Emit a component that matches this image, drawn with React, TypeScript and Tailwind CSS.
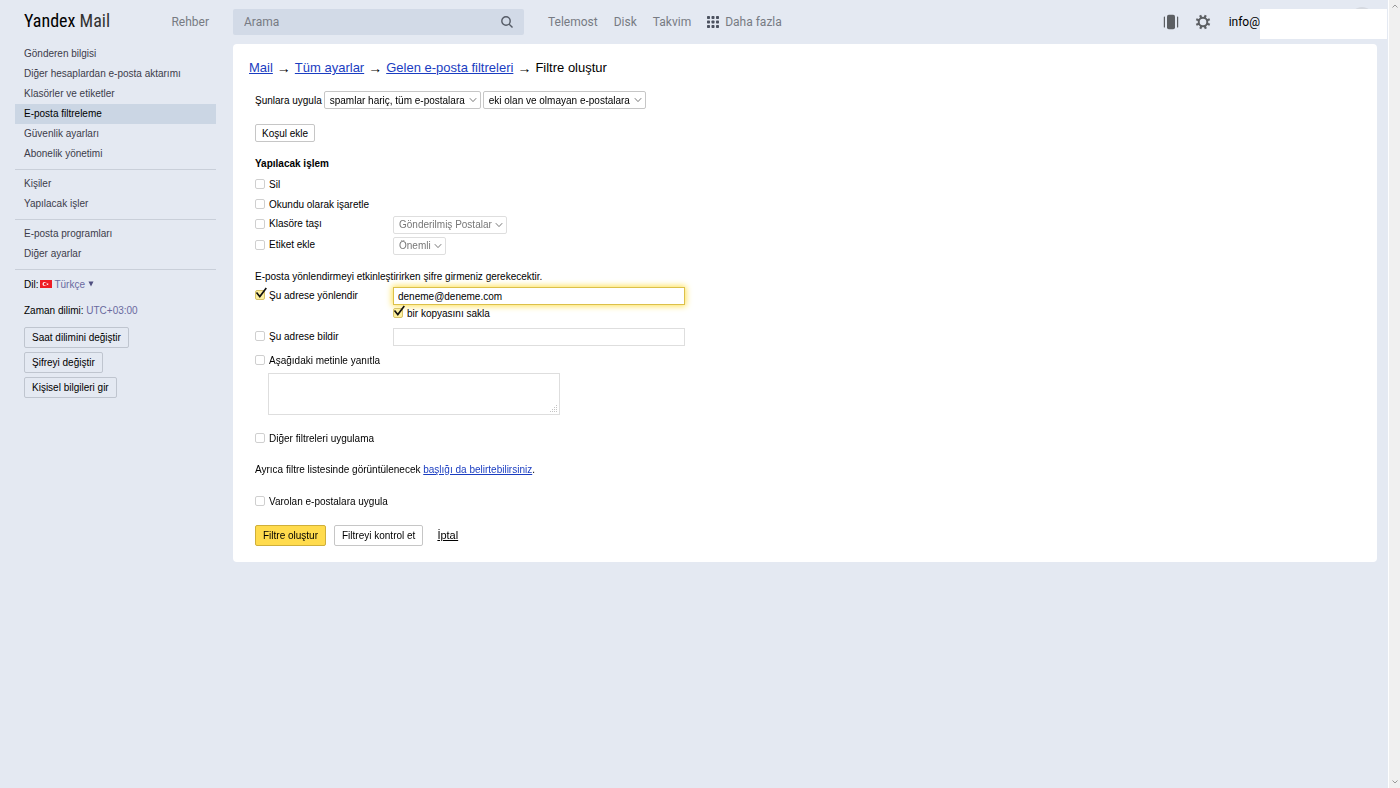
import React, { useState } from 'react';
import clsx from 'clsx';

const menuGroups = [
  [
    'Gönderen bilgisi',
    'Diğer hesaplardan e-posta aktarımı',
    'Klasörler ve etiketler',
    'E-posta filtreleme',
    'Güvenlik ayarları',
    'Abonelik yönetimi',
  ],
  ['Kişiler', 'Yapılacak işler'],
  ['E-posta programları', 'Diğer ayarlar'],
];

const services = ['Telemost', 'Disk', 'Takvim'];

const SearchIcon = () => (
  <svg className="w-3 h-3" viewBox="0 0 12 12" fill="none" stroke="#555b66" strokeWidth="1.4">
    <circle cx="5" cy="5" r="4.2" />
    <path d="M8.2 8.2 11.5 11.5" />
  </svg>
);

const GridIcon = () => (
  <svg className="w-3 h-3" viewBox="0 0 12 12" fill="#4c5260">
    {[0, 4.5, 9].map((y) =>
      [0, 4.5, 9].map((x) => <rect key={`${x}-${y}`} x={x} y={y} width="3" height="3" rx="0.7" />)
    )}
  </svg>
);

const PanelIcon = () => (
  <svg className="w-4 h-4" viewBox="0 0 16 16" fill="#5c5f63">
    <rect x="4" y="0.8" width="8" height="14.4" rx="1.8" />
    <rect x="0.8" y="2.5" width="1.2" height="11" rx="0.5" />
    <rect x="14" y="2.5" width="1.2" height="11" rx="0.5" />
  </svg>
);

const GearIcon = () => (
  <svg className="w-4 h-4" viewBox="0 0 16 16" fill="none" stroke="#5c5f63">
    <circle cx="8" cy="8" r="4.3" strokeWidth="2" />
    {[22, 67, 112, 157, 202, 247, 292, 337].map((a) => (
      <path key={a} d="M8 0.7V3.6" strokeWidth="2.2" transform={`rotate(${a} 8 8)`} />
    ))}
  </svg>
);

const FlagIcon = () => (
  <svg className="w-3 h-2" viewBox="0 0 12 8">
    <rect width="12" height="8" fill="#ee1c25" />
    <circle cx="4.6" cy="4" r="2.1" fill="#fff" />
    <circle cx="5.3" cy="4" r="1.6" fill="#ee1c25" />
    <path d="m7.6 2.9.3.8.9.1-.7.5.2.9-.7-.5-.8.5.3-.9-.7-.5.9-.1z" fill="#fff" />
  </svg>
);

interface CheckProps {
  label: string;
  defaultChecked?: boolean;
}

const Check: React.FC<CheckProps> = ({ label, defaultChecked }) => (
  <label className="inline-flex items-center gap-1">
    <span className="relative flex">
      <input
        type="checkbox"
        defaultChecked={defaultChecked}
        className="peer appearance-none w-[10px] h-[10px] rounded-xs border border-[#cfcfcf] bg-white checked:border-[#d6c36a] checked:bg-[#fdf0a0]"
      />
      <svg
        className="absolute left-0 bottom-px w-3 h-3 pointer-events-none hidden peer-checked:block"
        viewBox="0 0 12 12"
        fill="none"
        stroke="#111"
        strokeWidth="1.6"
      >
        <path d="M1.5 5.6 4.8 9.6 11.3 1" />
      </svg>
    </span>
    {label}
  </label>
);

interface PickerProps {
  label: string;
  value: string;
  disabled?: boolean;
}

const Picker: React.FC<PickerProps> = ({ label, value, disabled }) => (
  <span className={clsx('relative inline-flex', disabled ? 'text-[#777]' : 'text-black')}>
    <select
      aria-label={label}
      disabled={disabled}
      className={clsx(
        'appearance-none h-[18px] pl-[5px] pr-3.5 rounded-xs border bg-white',
        disabled ? 'border-[#dedede]' : 'border-[#c6c6c6]'
      )}
    >
      <option>{value}</option>
    </select>
    <svg
      className="absolute right-1 top-[5px] w-2 h-2 pointer-events-none"
      viewBox="0 0 8 8"
      fill="none"
      stroke="#777"
    >
      <path d="M0.8 2.2 4 5.6 7.2 2.2" />
    </svg>
  </span>
);

const Header = () => (
  <header className="flex items-center h-11 pb-px text-xs text-[#777b83] font-[Roboto,sans-serif]">
    <div className="w-[233px] shrink-0 flex items-center justify-between pl-6 pr-6">
      <a href="#" className="pb-0.5 text-lg leading-6 text-black font-['Roboto_Condensed','Open_Sans_Condensed','DejaVu_Sans_Condensed',sans-serif]">
        Yandex <span className="text-[#333]">Mail</span>
      </a>
      <a href="#">Rehber</a>
    </div>
    <form className="w-[291px] h-[26px] flex items-center px-[11px] rounded-xs bg-[#d2dae7]">
      <input
        type="text"
        aria-label="Arama"
        placeholder="Arama"
        className="flex-1 min-w-0 bg-transparent outline-none placeholder:text-[#777b83]"
      />
      <button type="button" aria-label="Ara">
        <SearchIcon />
      </button>
    </form>
    <nav className="flex items-center gap-4 ml-6">
      {services.map((s) => (
        <a key={s} href="#">{s}</a>
      ))}
      <a href="#" className="flex items-center gap-1.5">
        <GridIcon />
        Daha fazla
      </a>
    </nav>
    <div className="flex items-center ml-auto text-black">
      <button type="button" aria-label="Panel" className="mr-4">
        <PanelIcon />
      </button>
      <button type="button" aria-label="Ayarlar" className="mr-[18px]">
        <GearIcon />
      </button>
      <span>info@</span>
      <div className="relative w-[127px] h-[30px] mt-1 mr-px">
        <span className="absolute left-[90px] -top-0.5 w-6 h-6 rounded-full bg-[#d5d9e0]" />
        <span className="absolute inset-0 bg-white" />
      </div>
    </div>
  </header>
);

const sideButton = 'h-[21px] px-[7px] rounded-xs border border-[#bfc5cf] text-black';

const Sidebar = () => (
  <aside className="w-[233px] shrink-0 pl-[15px] pr-[17px] text-[#3c3c4a]">
    {menuGroups.map((group, i) => (
      <nav key={i} className="border-b border-[#c9cfd9] pb-[5px] mb-1">
        {group.map((item) => (
          <a
            key={item}
            href="#"
            className={clsx('block h-5 leading-[19px] px-[9px]', item === 'E-posta filtreleme' && 'bg-[#cbd6e4] text-black')}
          >
            {item}
          </a>
        ))}
      </nav>
    ))}
    <div className="pl-[9px]">
      <div className="flex items-center h-5 text-black">
        Dil:
        <button type="button" className="flex items-center gap-0.5 ml-0.5 text-[#6a6a9f]">
          <FlagIcon />
          Türkçe
          <svg className="w-1.5 h-1.5 ml-px" viewBox="0 0 6 6" fill="#4f4f80">
            <path d="M0.5 0.5h5L3 5.5z" />
          </svg>
        </button>
      </div>
      <p className="mt-[7px] leading-5 text-black">
        Zaman dilimi: <a href="#" className="text-[#6a6a9f]">UTC+03:00</a>
      </p>
      <div className="flex flex-col items-start gap-1 mt-[6px]">
        <button type="button" className={sideButton}>Saat dilimini değiştir</button>
        <button type="button" className={sideButton}>Şifreyi değiştir</button>
        <button type="button" className={sideButton}>Kişisel bilgileri gir</button>
      </div>
    </div>
  </aside>
);

const crumbs = ['Mail', 'Tüm ayarlar', 'Gelen e-posta filtreleri'];

const FilterForm = () => {
  const [address, setAddress] = useState('deneme@deneme.com');

  return (
    <main className="flex-1 mr-[11px] pt-3 pb-4 rounded-sm bg-white text-black">
      <h1 className="flex items-center gap-1 h-6 pl-4 text-[13px]">
        {crumbs.map((c) => (
          <React.Fragment key={c}>
            <a href="#" className="text-[#1a3dc1] underline">{c}</a>
            <span className="text-sm">→</span>
          </React.Fragment>
        ))}
        Filtre oluştur
      </h1>

      <form className="pl-[22px]">
        <div className="flex items-center gap-0.5 h-5 mt-[10px]">
          Şunlara uygula
          <Picker label="E-posta türü" value="spamlar hariç, tüm e-postalara" />
          <Picker label="Ek durumu" value="eki olan ve olmayan e-postalara" />
        </div>
        <button type="button" className="block h-[18px] mt-[14px] px-1.5 rounded-xs border border-[#c6c6c6]">
          Koşul ekle
        </button>

        <h2 className="h-5 leading-5 mt-3 font-bold">Yapılacak işlem</h2>
        <div className="flex items-center h-5"><Check label="Sil" /></div>
        <div className="flex items-center h-5"><Check label="Okundu olarak işaretle" /></div>
        <div className="flex items-center h-[21px]">
          <div className="w-[138px]"><Check label="Klasöre taşı" /></div>
          <Picker label="Klasör" value="Gönderilmiş Postalar" disabled />
        </div>
        <div className="flex items-center h-[21px]">
          <div className="w-[138px]"><Check label="Etiket ekle" /></div>
          <Picker label="Etiket" value="Önemli" disabled />
        </div>

        <p className="leading-[18px] mt-3">E-posta yönlendirmeyi etkinleştirirken şifre girmeniz gerekecektir.</p>
        <div className="flex items-center h-5">
          <div className="w-[138px]"><Check label="Şu adrese yönlendir" defaultChecked /></div>
          <input
            type="text"
            aria-label="Yönlendirme adresi"
            autoFocus
            value={address}
            onChange={(e) => setAddress(e.target.value)}
            className="w-[292px] h-[18px] px-1 border border-[#dcc04a] bg-white outline-none shadow-[0_0_6px_1px_#ffe04d]"
          />
        </div>
        <div className="flex items-center h-[14px] pl-[138px]">
          <Check label="bir kopyasını sakla" defaultChecked />
        </div>
        <div className="flex items-center h-5 mt-[7px]">
          <div className="w-[138px]"><Check label="Şu adrese bildir" /></div>
          <input
            type="text"
            aria-label="Bildirim adresi"
            className="w-[292px] h-[18px] px-1 border border-[#dedede] bg-white"
          />
        </div>
        <div className="flex items-center h-5 mt-[3px]"><Check label="Aşağıdaki metinle yanıtla" /></div>
        <div className="relative w-[292px] mt-[3px] ml-[13px]">
          <textarea
            aria-label="Yanıt metni"
            className="block w-full h-[42px] resize-none border border-[#dedede] bg-white"
          />
          <svg className="absolute right-0.5 bottom-0.5 w-2 h-2 pointer-events-none" viewBox="0 0 8 8" fill="#c4c4c4">
            <path d="M6 0h1v1H6zM6 2h1v1H6zM4 2h1v1H4zM6 4h1v1H6zM4 4h1v1H4zM2 4h1v1H2zM6 6h1v1H6zM4 6h1v1H4zM2 6h1v1H2zM0 6h1v1H0z" />
          </svg>
        </div>
        <div className="flex items-center h-5 mt-[13px]"><Check label="Diğer filtreleri uygulama" /></div>
        <p className="leading-5 mt-3">
          Ayrıca filtre listesinde görüntülenecek{' '}
          <a href="#" className="text-[#1a3dc1] underline">başlığı da belirtebilirsiniz</a>.
        </p>
        <div className="flex items-center h-5 mt-[11px]"><Check label="Varolan e-postalara uygula" /></div>
        <div className="flex items-center mt-[14px]">
          <button type="submit" className="h-[21px] px-[7px] rounded-xs border border-[#cfaf3a] bg-[#ffdb4d]">
            Filtre oluştur
          </button>
          <button type="button" className="h-[21px] px-[7px] ml-2 rounded-xs border border-[#c6c6c6]">
            Filtreyi kontrol et
          </button>
          <a href="#" className="ml-[14px] text-[11px] underline">İptal</a>
        </div>
      </form>
    </main>
  );
};

const App: React.FC = () => (
  <div className="min-h-screen flex bg-[#e4e9f2] text-[10px] font-['Liberation_Sans',Arial,sans-serif]">
    <div className="flex-1 min-w-0">
      <Header />
      <div className="flex items-start">
        <Sidebar />
        <FilterForm />
      </div>
    </div>
    <div className="w-3 shrink-0 flex flex-col items-center justify-between py-[3px] border-l border-white bg-[#f0f0f0]">
      <svg className="w-1.5 h-1.5" viewBox="0 0 6 6" fill="none" stroke="#999">
        <path d="M0.5 4.5 3 2l2.5 2.5" />
      </svg>
      <svg className="w-1.5 h-1.5" viewBox="0 0 6 6" fill="none" stroke="#999">
        <path d="M0.5 1.5 3 4l2.5-2.5" />
      </svg>
    </div>
  </div>
);

export default App;
